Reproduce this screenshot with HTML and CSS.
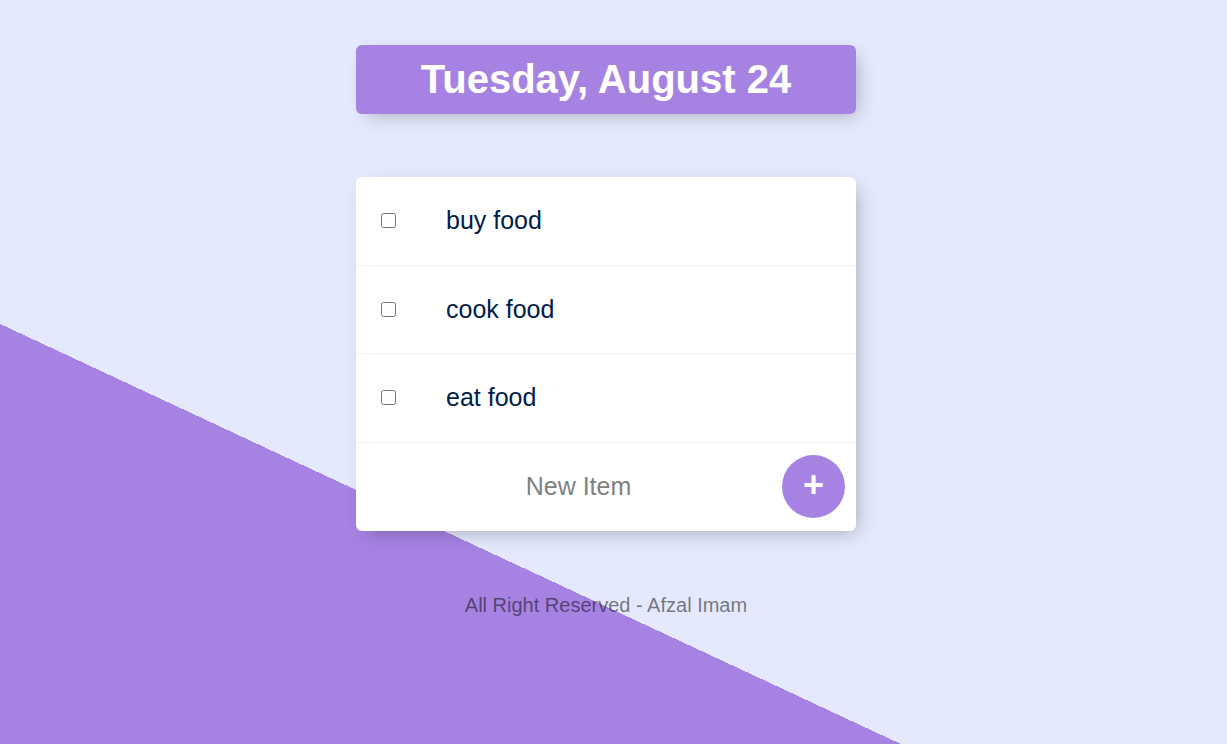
FILE: index.html
```html
<!DOCTYPE html>
<html lang="en">
<head>
<meta charset="utf-8">
<title>To-Do List</title>
<link rel="stylesheet" href="styles.css">
</head>
<body>
  <div class="box heading">
    <h1>Tuesday, August 24</h1>
  </div>
  <div class="box list">
    <div class="item">
      <input type="checkbox">
      <p>buy food</p>
    </div>
    <div class="item">
      <input type="checkbox">
      <p>cook food</p>
    </div>
    <div class="item">
      <input type="checkbox">
      <p>eat food</p>
    </div>
    <form class="item new-item" onsubmit="return false;">
      <input type="text" name="newItem" placeholder="New Item" autocomplete="off">
      <button type="submit" name="list">+</button>
    </form>
  </div>
  <footer class="footer">All Right Reserved - Afzal Imam</footer>
</body>
</html>
```
FILE: styles.css
```css
html {
  background-color: #E4E9FD;
  background-image: linear-gradient(25deg, #A683E3 50%, #E4E9FD 50%);
  background-size: 1212px 1213px;
  background-repeat: no-repeat;
  font-family: "Liberation Sans", Arial, Helvetica, sans-serif;
}

body {
  margin: 0;
  padding: 45px 15px 0 0;
}

.box {
  width: 500px;
  margin: 0 auto;
  background: #fff;
  border-radius: 6px;
  box-shadow: 6px 6px 19px -6px rgba(0, 0, 0, 0.3);
}

.heading {
  background-color: #A683E3;
  text-align: center;
}

.heading h1 {
  margin: 0;
  height: 69px;
  font-size: 40px;
  line-height: 69px;
  font-weight: bold;
  color: #fff;
}

.list {
  margin-top: 63px;
}

.item {
  box-sizing: border-box;
  height: 88.5px;
  display: flex;
  align-items: center;
  border-bottom: 1px solid #F1F1F1;
}

.item:last-child {
  border-bottom: 0;
}

.item input[type="checkbox"] {
  width: 15px;
  height: 15px;
  margin: 0 25px;
  flex: none;
}

.item p {
  margin: 0;
  padding: 0 25px;
  font-size: 25px;
  color: #00204a;
}

.new-item {
  margin: 0 0 0 25px;
}

.new-item input[type="text"] {
  box-sizing: border-box;
  width: 395px;
  height: 75px;
  padding: 0;
  border: none;
  background: transparent;
  text-align: center;
  font-family: inherit;
  font-size: 25px;
  color: #00204a;
}

.new-item input[type="text"]:focus {
  outline: none;
}

.new-item input[type="text"]::placeholder {
  color: grey;
  opacity: 1;
}

.new-item button {
  width: 63px;
  height: 63px;
  margin-left: 6px;
  padding: 0 0 3px;
  border: 0;
  border-radius: 50%;
  background-color: #A683E3;
  color: #fff;
  font-family: inherit;
  font-size: 36px;
  font-weight: bold;
  line-height: 1;
  display: flex;
  align-items: center;
  justify-content: center;
  cursor: pointer;
}

.footer {
  margin-top: 62px;
  text-align: center;
  font-size: 20px;
  line-height: 24px;
  color: rgba(0, 0, 0, 0.5);
}
```
